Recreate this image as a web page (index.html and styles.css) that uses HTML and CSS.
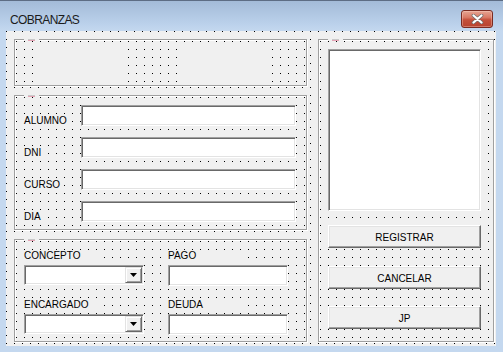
FILE: index.html
```html
<!DOCTYPE html>
<html lang="es">
<head>
<meta charset="UTF-8">
<meta name="viewport" content="width=device-width, initial-scale=1.0">
<title>COBRANZAS</title>
<link rel="stylesheet" href="styles.css">
</head>
<body>

<div class="window">
    <div class="titlebar">
        <span class="title">COBRANZAS</span>
        <span class="close">
            <svg width="13" height="10" viewBox="0 0 13 10">
                <path d="M2.5 1.5 L10.5 8.5 M10.5 1.5 L2.5 8.5" stroke="#6b6b6b" stroke-width="3.6" stroke-linecap="round"/>
                <path d="M2.5 1.5 L10.5 8.5 M10.5 1.5 L2.5 8.5" stroke="#fff" stroke-width="2.2" stroke-linecap="round"/>
            </svg>
        </span>
    </div>

    <div class="client">
        <div class="left">
            <!-- marco superior (etiquetas sin texto) -->
            <div class="frame frame-top">
                <div class="blank"></div>
                <div class="blank"></div>
            </div>

            <!-- datos del alumno -->
            <div class="frame frame-student">
                <span class="lbl">ALUMNO</span><div class="textbox"></div>
                <span class="lbl">DNI</span><div class="textbox"></div>
                <span class="lbl">CURSO</span><div class="textbox"></div>
                <span class="lbl">DIA</span><div class="textbox"></div>
            </div>

            <!-- pago -->
            <div class="frame frame-pay">
                <div class="field">
                    <span class="lbl lbl-wide">CONCEPTO</span>
                    <div class="textbox combo"><span class="drop"><svg width="7" height="4" viewBox="0 0 7 4"><polygon points="0,0 7,0 3.5,4" fill="#000"/></svg></span></div>
                </div>
                <div class="field">
                    <span class="lbl lbl-wide">PAGO</span>
                    <div class="textbox small"></div>
                </div>
                <div class="field">
                    <span class="lbl lbl-wide">ENCARGADO</span>
                    <div class="textbox combo"><span class="drop"><svg width="7" height="4" viewBox="0 0 7 4"><polygon points="0,0 7,0 3.5,4" fill="#000"/></svg></span></div>
                </div>
                <div class="field">
                    <span class="lbl lbl-wide">DEUDA</span>
                    <div class="textbox small"></div>
                </div>
            </div>
        </div>

        <div class="frame frame-side">
            <div class="picture"></div>
            <div class="btn btn-first">REGISTRAR</div>
            <div class="btn btn-second">CANCELAR</div>
            <div class="btn btn-third">JP</div>
        </div>
    </div>
</div>

</body>
</html>
```

FILE: styles.css
```css
body {
  margin: 0;
  padding: 0;
  background-color: #c4d8ef;
  font-family: 'Liberation Sans', Arial, sans-serif;
  color: #000;
}
.window {
  width: 503px;
  height: 352px;
  box-sizing: border-box;
  padding: 0 7px 6px 6px;
  background: linear-gradient(#a2bad7 0, #bbd1eb 24px, #c4d8ef 31px, #c4d8ef 100%);
  box-shadow: inset 0 1px 0 #5d6d84;
}
.titlebar {
  height: 31px;
  box-sizing: border-box;
  padding: 10px 3px 0 4px;
  display: flex;
  justify-content: space-between;
  align-items: flex-start;
}
.title {
  font-size: 12px;
  line-height: 20px;
  letter-spacing: -0.6px;
  color: #1b1b1b;
}
.close {
  width: 32px;
  height: 18px;
  box-sizing: border-box;
  border: 1px solid #7a2b22;
  border-radius: 3px;
  background: linear-gradient(#e6a593 0, #d97a66 40%, #c4503b 55%, #b8432f 100%);
  box-shadow: inset 0 0 0 1px rgba(255, 220, 210, 0.35);
  display: flex;
  justify-content: center;
  align-items: center;
}

/* area del formulario con la cuadricula de puntos */
.client {
  height: 315px;
  box-sizing: border-box;
  padding: 8px 0 0 8px;
  display: flex;
  gap: 11px;
  background-color: #f0f0f0;
  background-image: conic-gradient(from 270deg at 1px 1px, #000 90deg, transparent 0);
  background-size: 8px 8px;
}
.left {
  width: 293px;
  display: flex;
  flex-direction: column;
}
.frame {
  position: relative;
  box-sizing: border-box;
  border: 1px solid #a0a0a0;
  box-shadow: inset 1px 1px 0 #fff, 1px 1px 0 #fff;
  background-color: #f0f0f0;
  background-image: conic-gradient(from 270deg at 1px 1px, #000 90deg, transparent 0);
  background-size: 8px 8px;
  background-position: 1px 1px;
}
.frame::before {
  content: '';
  position: absolute;
  left: 9px;
  top: -1px;
  width: 15px;
  height: 2px;
  background: #f0f0f0;
}
.frame::after {
  content: '';
  position: absolute;
  left: 13px;
  top: -1px;
  width: 7px;
  height: 2px;
  background: linear-gradient(#c9c9c9 50%, #e4a3b4 50%);
}
.frame-top {
  width: 293px;
  height: 47px;
  display: flex;
  gap: 50px;
  padding: 3px 0 1px 18px;
}
.blank {
  width: 94px;
  background: #f0f0f0;
}
.frame-student {
  width: 293px;
  height: 135px;
  margin-top: 9px;
  padding: 9px 0 0 9px;
  display: grid;
  grid-template-columns: 57px 215px;
  grid-auto-rows: 21px;
  row-gap: 11px;
}
.lbl {
  font-size: 10px;
  line-height: 12px;
  background: #f0f0f0;
}
.frame-student .lbl {
  align-self: end;
  justify-self: start;
  margin-bottom: -1px;
}
.textbox {
  box-sizing: border-box;
  height: 21px;
  background: #fff;
  border-top: 1px solid #a0a0a0;
  border-left: 1px solid #a0a0a0;
  border-right: 1px solid #fff;
  border-bottom: 1px solid #fff;
  box-shadow: inset 1px 1px 0 #696969, inset -1px -1px 0 #e3e3e3;
}
.frame-pay {
  width: 293px;
  height: 103px;
  margin-top: 9px;
  padding: 10px 0 0 9px;
  display: grid;
  grid-template-columns: 120px 120px;
  column-gap: 24px;
  row-gap: 13px;
  align-content: start;
}
.field {
  display: flex;
  flex-direction: column;
  align-items: flex-start;
}
.field .lbl {
  margin-bottom: 3px;
}
.lbl-wide {
  min-width: 80px;
}
.combo {
  width: 120px;
  height: 20px;
  padding: 1px 1px;
  display: flex;
  justify-content: flex-end;
}
.small {
  width: 120px;
}
.drop {
  width: 17px;
  height: 16px;
  box-sizing: border-box;
  background: #f0f0f0;
  border-top: 1px solid #e3e3e3;
  border-left: 1px solid #e3e3e3;
  border-right: 1px solid #696969;
  border-bottom: 1px solid #696969;
  box-shadow: inset 1px 1px 0 #fff, inset -1px -1px 0 #a0a0a0;
  display: flex;
  justify-content: center;
  align-items: center;
}
.frame-side {
  width: 176px;
  height: 303px;
  padding: 9px 0 0 9px;
  display: flex;
  flex-direction: column;
}
.picture {
  width: 153px;
  height: 162px;
  box-sizing: border-box;
  background: #fff;
  border-top: 1px solid #a0a0a0;
  border-left: 1px solid #a0a0a0;
  border-right: 1px solid #fff;
  border-bottom: 1px solid #fff;
  box-shadow: inset 1px 1px 0 #696969, inset -1px -1px 0 #e3e3e3;
}
.btn {
  width: 153px;
  height: 23px;
  box-sizing: border-box;
  padding-top: 1px;
  background: #f0f0f0;
  border-top: 1px solid #fff;
  border-left: 1px solid #fff;
  border-right: 1px solid #696969;
  border-bottom: 1px solid #696969;
  box-shadow: inset -1px -1px 0 #a0a0a0, inset 1px 1px 0 #e3e3e3;
  font-size: 10px;
  display: flex;
  justify-content: center;
  align-items: center;
}
.btn-first {
  margin-top: 14px;
}
.btn-second {
  margin-top: 18px;
}
.btn-third {
  margin-top: 17px;
}
```
